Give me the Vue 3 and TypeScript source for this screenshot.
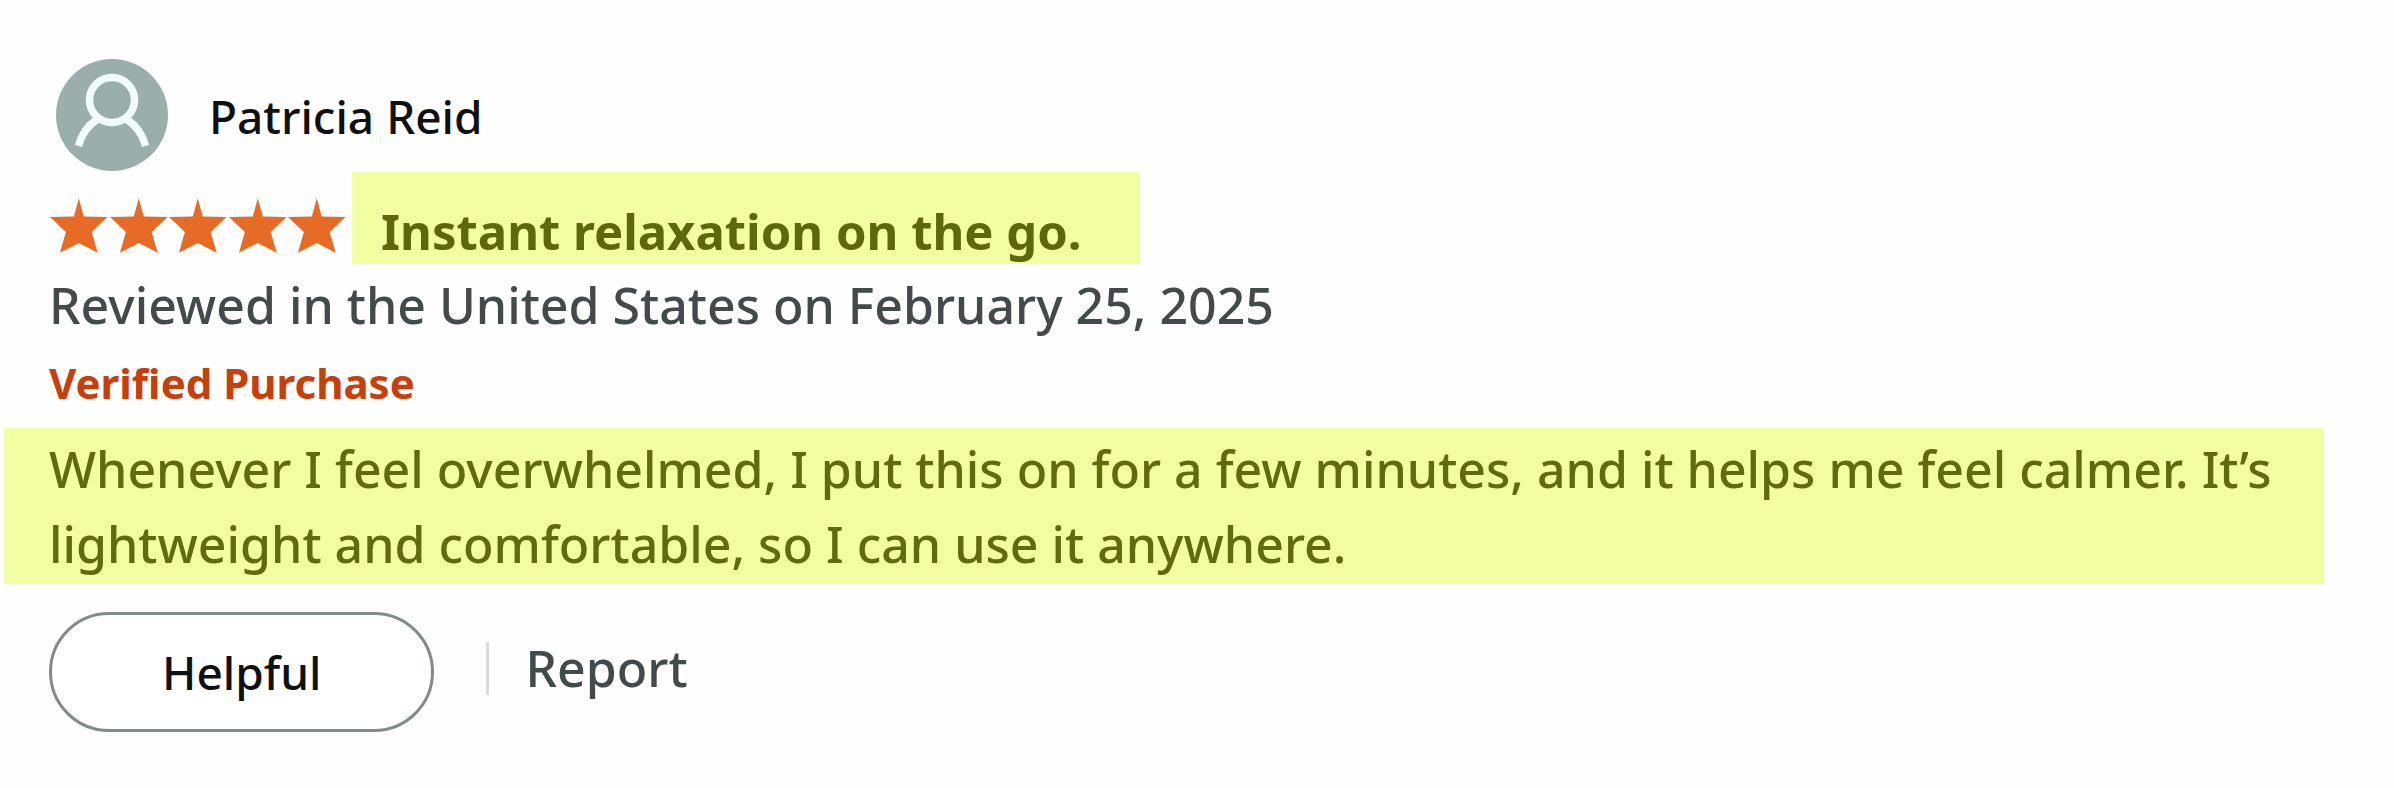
<script setup lang="ts">
interface Review {
  author: string
  rating: number
  title: string
  date: string
  badge: string
  body: string
}

const review: Review = {
  author: 'Patricia Reid',
  rating: 5,
  title: 'Instant relaxation on the go.',
  date: 'Reviewed in the United States on February 25, 2025',
  badge: 'Verified Purchase',
  body: 'Whenever I feel overwhelmed, I put this on for a few minutes, and it helps me feel calmer. It’s lightweight and comfortable, so I can use it anywhere.',
}
</script>

<template>
  <article class="review">
    <header class="author">
      <svg class="avatar" viewBox="0 0 112 112" aria-hidden="true">
        <circle cx="56" cy="56" r="56" fill="#9aaeac" />
        <g fill="none" stroke="#f1fcfe" stroke-width="7.500">
          <circle cx="56" cy="41" r="22.500" />
          <path d="M22.500 87C25 77 31 67 41 60.500M89.500 87C87 77 81 67 71 60.500" />
        </g>
      </svg>
      <span class="name">{{ review.author }}</span>
    </header>

    <div class="heading">
      <div class="stars" role="img" :aria-label="`${review.rating} out of 5 stars`">
        <svg v-for="n in review.rating" :key="n" class="star" viewBox="0 0 60 56">
          <path d="M30 0L35 18.500L59 19L43 34L49 55L30 45L11 55L17 34L1 19L25 18.500Z" />
        </svg>
      </div>
      <h2 class="title">{{ review.title }}</h2>
    </div>

    <p class="date">{{ review.date }}</p>
    <p class="badge">{{ review.badge }}</p>
    <p class="body">{{ review.body }}</p>

    <footer class="actions">
      <button class="helpful" type="button">Helpful</button>
      <div class="report">
        <a href="#report">Report</a>
      </div>
    </footer>
  </article>
</template>

<style>
body {
  margin: 0;
  background: #fefefe;
}
</style>

<style scoped>
.review {
  padding: 59px 70px 56px 4px;
  font-family: "Noto Sans", "Open Sans", sans-serif;
  font-size: 50px;
  font-weight: 500;
  color: #434a4c;
}

.author,
.heading,
.date,
.badge,
.actions {
  margin: 0;
  padding-left: 45px;
}

.author {
  display: flex;
  align-items: center;
  gap: 41px;
}

.avatar {
  width: 112px;
  height: 112px;
  margin-left: 7px;
}

.name {
  padding-top: 2px;
  font-size: 46px;
  line-height: 66px;
  color: #0f1111;
}

.heading {
  display: flex;
  align-items: flex-start;
  gap: 5px;
  padding-top: 1px;
}

.stars {
  display: flex;
  width: 298px;
  padding-top: 26px;
}

.star {
  flex: 1;
  min-width: 0;
  height: 56px;
  fill: #e66b27;
}

.title {
  margin: 0;
  padding: 26px 58px 0 29px;
  font-size: 49px;
  font-weight: 700;
  line-height: 66px;
  color: #5c680c;
  background: #f2ffa2;
}

.date {
  line-height: 82px;
}

.badge {
  font-size: 42px;
  font-weight: 700;
  line-height: 74px;
  color: #c7400c;
}

.body {
  margin: 8px 0 28px;
  padding: 4px 45px 2px;
  line-height: 75px;
  color: #5f6c0e;
  background: #f2ffa2;
}

.actions {
  display: flex;
  align-items: center;
  gap: 52px;
}

.helpful {
  box-sizing: border-box;
  height: 120px;
  padding: 0 110px;
  border: 3px solid #838a8a;
  border-radius: 60px;
  background: #ffffff;
  font: inherit;
  font-size: 46px;
  color: #0f1111;
}

.report {
  padding-bottom: 8px;
}

.report a {
  display: block;
  padding-left: 36px;
  border-left: 3px solid #d9dbdb;
  line-height: 53px;
  color: inherit;
  text-decoration: none;
}
</style>
